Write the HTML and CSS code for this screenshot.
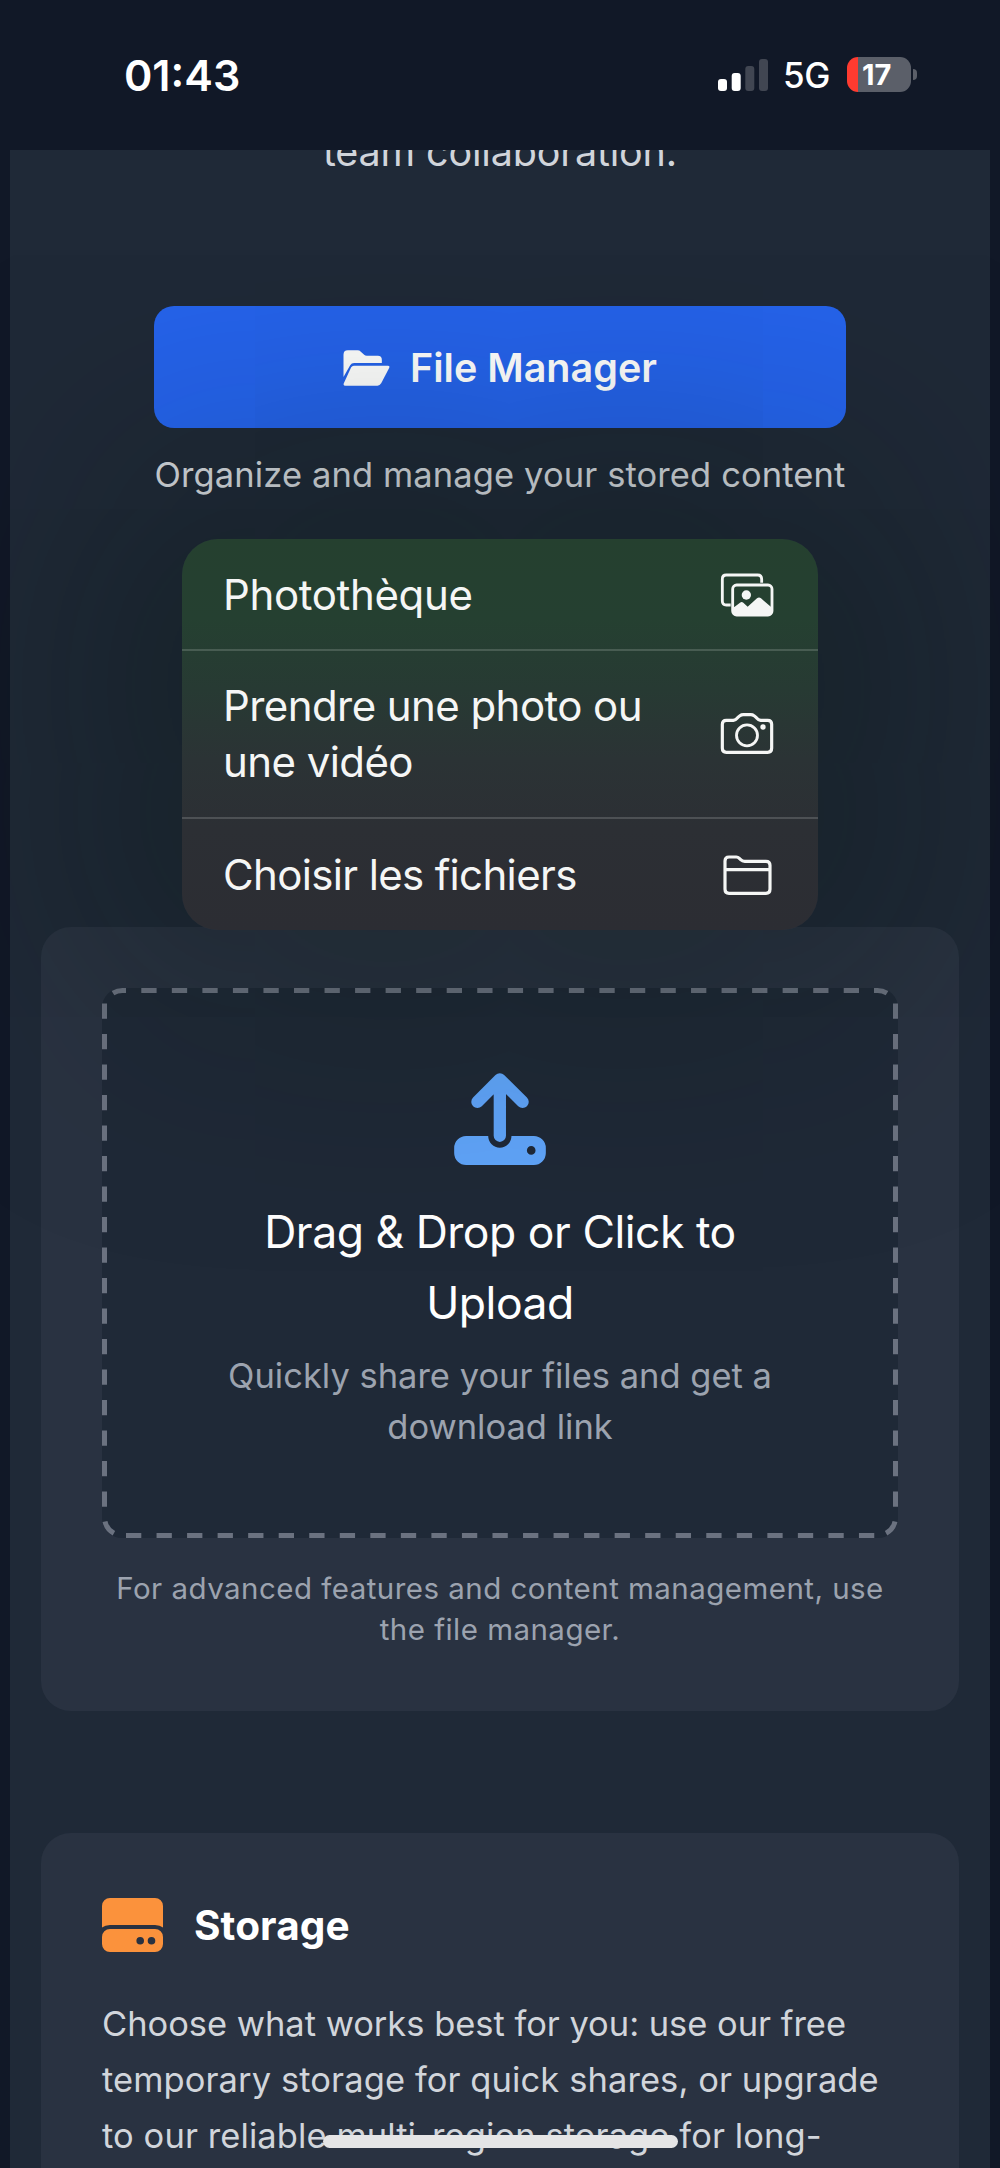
FILE: index.html
```html
<!DOCTYPE html>
<html lang="en">
<head>
<meta charset="utf-8">
<title>File Manager</title>
<link rel="stylesheet" href="styles.css">
</head>
<body>
<div class="screen">
  <header class="status">
    <span class="clock">01:43</span>
    <div class="indicators">
      <svg class="signal" viewBox="0 0 50 32"><rect x="0" y="20" width="9" height="12" rx="3" fill="#fff"/><rect x="13.7" y="14" width="9" height="18" rx="3" fill="#fff"/><rect x="27.3" y="7" width="9" height="25" rx="3" fill="#414652"/><rect x="41" y="0" width="9" height="32" rx="3" fill="#414652"/></svg>
      <span class="network">5G</span>
      <div class="battery"><span class="level">17</span></div>
      <span class="nub"></span>
    </div>
  </header>

  <main class="page">
    <p class="intro">team collaboration.</p>
    <section class="manager">
      <a class="button">
        <svg class="folder-open" viewBox="67 57 140 108" fill="currentColor"><path d="M68 138V71Q68 58 81 58H110Q116 58 120 62L130 71Q133 74 138 74H171Q183 74 183 86V96H100Q92 96 88 103Z"/><path d="M99 104H201Q208 104 205 111L181 157Q177 164 170 164H74Q66 164 69 157L91 109Q94 104 99 104Z"/></svg>
        <span>File Manager</span>
      </a>
      <p class="caption">Organize and manage your stored content</p>
    </section>

    <section class="card upload">
      <div class="dropzone">
        <svg class="dashes" viewBox="0 0 796 550" fill="none" stroke="#6b7280" stroke-width="5">
          <path d="M39.3 2.5H757M24 547.5H772.3" stroke-dasharray="15.3 15.24"/>
          <path d="M2.5 15.5V519M793.5 15.5V519" stroke-dasharray="15.3 15.2"/>
          <path d="M24 2.5H20.5A18 18 0 0 0 11 5.2M772 2.5H775.5A18 18 0 0 1 785 5.2M3 533.5A18 18 0 0 0 11.9 545.3M793 533.5A18 18 0 0 1 784.1 545.3"/>
        </svg>
        <svg class="upload-icon" viewBox="101 69 276 277">
          <path fill="#60a5fa" fill-rule="evenodd" d="M137 259H203.5A35 35 0 0 0 273.5 259H341A36 36 0 0 1 377 295V310A36 36 0 0 1 341 346H137A36 36 0 0 1 101 310V295A36 36 0 0 1 137 259ZM346 302A13 13 0 1 0 320 302A13 13 0 1 0 346 302Z"/>
          <path fill="none" stroke="#60a5fa" stroke-width="37" stroke-linecap="round" stroke-linejoin="round" d="M171 156L238.5 88L307 156M238.5 88V258"/>
        </svg>
        <h2 class="drop-title">Drag &amp; Drop or Click to<br>Upload</h2>
        <p class="drop-text">Quickly share your files and get a<br>download link</p>
      </div>
      <p class="note">For advanced features and content management, use<br>the file manager.</p>
    </section>

    <section class="card storage">
      <div class="heading">
        <svg class="drive" viewBox="0 0 61 54" fill="#fb923c"><path d="M0 29.5V8A8 8 0 0 1 8 0H53A8 8 0 0 1 61 8V29.5Q58 27 53 27H8Q3 27 0 29.5Z"/><path fill-rule="evenodd" d="M8 31H53A8 8 0 0 1 61 39V46A8 8 0 0 1 53 54H8A8 8 0 0 1 0 46V39A8 8 0 0 1 8 31ZM42 42.7A3.8 3.8 0 1 0 34.4 42.7A3.8 3.8 0 1 0 42 42.7ZM53.3 42.7A3.8 3.8 0 1 0 45.7 42.7A3.8 3.8 0 1 0 53.3 42.7Z"/></svg>
        <h2>Storage</h2>
      </div>
      <p class="body">Choose what works best for you: use our free<br><span class="wide">temporary storage for quick shares, or upgrade<br>to our reliable multi-region storage for long-</span></p>
    </section>
  </main>

  <div class="menu">
    <div class="item"><span class="short">Photothèque</span>
      <svg viewBox="90 64 162 138" width="54" height="46"><g fill="none" stroke="currentColor" stroke-width="8.5"><path d="M215 96V86Q215 73 203 73H109Q97 73 97 85V151Q97 163 109 163H122"/><rect x="128" y="103" width="118" height="90" rx="12"/></g><circle cx="169" cy="133" r="14" fill="currentColor"/><path fill="currentColor" d="M129 172L150 156Q155 152 160 156L173 168L201 143Q207 138 213 143L246 171V184Q246 193 236 193H138Q129 193 129 184Z"/></svg></div>
    <div class="item tall"><span>Prendre une photo ou<br>une vidéo</span>
      <svg viewBox="90 484 162 138" width="54" height="46" fill="none" stroke="currentColor" stroke-width="9.5"><path d="M109 512H130Q137 511 143 504L150 498Q154 495 160 495H182Q188 495 192 498L199 504Q205 511 212 512H233Q245 512 245 524V596Q245 608 233 608H109Q97 608 97 596V524Q97 512 109 512Z"/><circle cx="171" cy="557" r="31.5" stroke-width="8.5"/><circle cx="219" cy="532" r="8" fill="currentColor" stroke="none"/></svg></div>
    <div class="item"><span class="tight">Choisir les fichiers</span>
      <svg viewBox="90 904 162 138" width="54" height="46" fill="none" stroke="currentColor" stroke-width="9.5"><path d="M117 919H139Q144 919 148 923L152 927Q157 932 164 932H228Q240 932 240 944V1016Q240 1028 228 1028H117Q105 1028 105 1016V931Q105 919 117 919ZM105 957H240"/></svg></div>
  </div>
  <div class="home-bar"></div>
</div>
</body>
</html>
```

FILE: styles.css
```css
* { box-sizing: border-box; }
body { margin: 0; background: #111827; font-family: Inter, "Liberation Sans", sans-serif; }
h2, p { margin: 0; font-weight: 400; }
svg { display: block; flex: none; }
.screen { position: relative; width: 1000px; height: 2168px; overflow: hidden; background: #111827; }

.status { position: relative; z-index: 3; height: 150px; padding: 0 83px 1px 124px; display: flex; justify-content: space-between; align-items: center; background: #111827; color: #fff; }
.clock { font-size: 43px; font-weight: 600; }
.indicators { display: flex; align-items: center; }
.signal { width: 50px; height: 32px; }
.network { font-size: 35px; font-weight: 500; letter-spacing: -.4px; margin-left: 15px; padding-top: 1px; }
.battery { width: 64px; height: 35px; margin-left: 17px; border-radius: 11px; background: linear-gradient(90deg, #ff3b30 11px, #5b5f69 11px); padding-left: 15px; font-size: 29px; line-height: 35px; font-weight: 700; }
.nub { width: 4px; height: 11px; margin-left: 2px; border-radius: 0 5px 5px 0; background: #5b5f69; }

.page { margin: 0 10px; height: 2018px; overflow: hidden; padding: 0 31px; background: #1f2937; display: flex; flex-direction: column; }
.intro { margin-top: -31px; font-size: 39.5px; line-height: 66px; letter-spacing: -.17px; text-align: center; color: #d1d5db; }
.manager { margin: 121px auto 0; width: 692px; text-align: center; }
.button { height: 122px; padding-top: 2px; border-radius: 20px; background: #2563eb; color: #fff; display: flex; align-items: center; justify-content: center; gap: 20px; font-size: 39.5px; font-weight: 600; }
.folder-open { width: 47px; height: 36px; }
.caption { margin-top: 21px; font-size: 34.5px; line-height: 51px; letter-spacing: .11px; color: #d1d5db; white-space: nowrap; }

.card { background: #293241; border-radius: 30px; padding: 61px; flex: none; }
.upload { margin-top: 427px; height: 784px; text-align: center; }
.dropzone { position: relative; height: 550px; border-radius: 20px; background: #1f2937; padding-top: 85px; display: flex; flex-direction: column; align-items: center; white-space: nowrap; }
.dashes { position: absolute; inset: 0; width: 796px; height: 550px; }
.upload-icon { width: 92px; height: 92px; }
.drop-title { margin-top: 32px; font-size: 44.5px; line-height: 71px; letter-spacing: -.48px; text-align: center; color: #fff; }
.drop-text { margin-top: 11px; font-size: 34.5px; line-height: 51px; color: #9ca3af; text-align: center; }
.note { margin-top: 30px; font-size: 29.5px; line-height: 40.7px; letter-spacing: .46px; color: #9ca3af; white-space: nowrap; }

.storage { margin-top: 122px; height: 400px; }
.heading { display: flex; align-items: center; gap: 31px; height: 61px; }
.drive { width: 61px; height: 54px; }
.heading h2 { padding-top: 2px; font-size: 40.5px; font-weight: 700; letter-spacing: .1px; color: #fff; }
.body { margin-top: 41px; font-size: 34.5px; line-height: 56px; letter-spacing: -.03px; color: #d1d5db; white-space: nowrap; }
.wide { letter-spacing: .09px; }

.menu { position: absolute; z-index: 2; left: 182px; top: 539px; width: 636px; height: 391px; border-radius: 36px; color: #f5f6f5; font-size: 42px; line-height: 56px; letter-spacing: -.57px; white-space: nowrap;
  background: linear-gradient(180deg, #25402f 0, #254031 80px, #273a33 150px, #2b3335 220px, #2c2f34 290px, #2c2d33 390px);
  box-shadow: 0 0 280px 70px rgba(0, 18, 8, .34); }
.item { height: 110px; padding: 1px 44px 0 41px; display: flex; align-items: center; justify-content: space-between; }
.item.tall { height: 170px; padding-top: 0; border: solid rgba(255, 255, 255, .16); border-width: 2px 0; }
.short { letter-spacing: -.35px; }
.tight { letter-spacing: -.65px; }
.home-bar { position: absolute; z-index: 3; left: 323px; top: 2135px; width: 355px; height: 13px; border-radius: 7px; background: #e5e5e6; }
```
